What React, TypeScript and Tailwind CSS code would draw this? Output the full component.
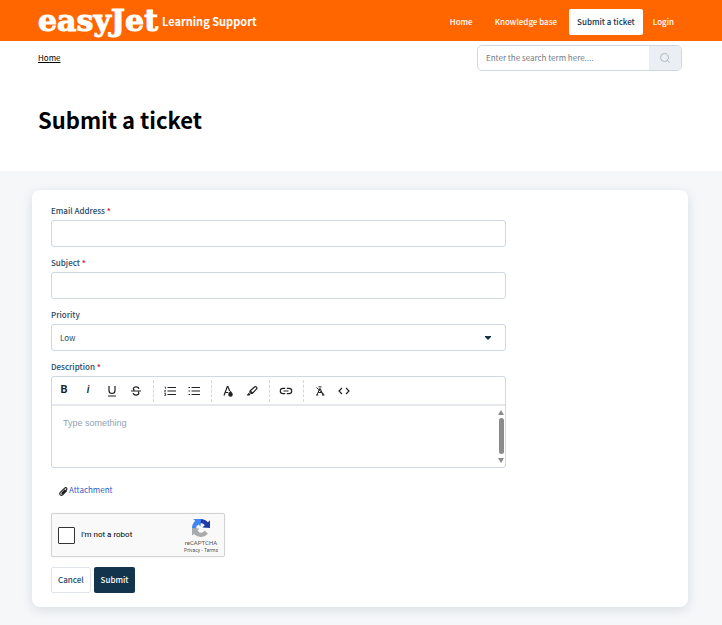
import type { ReactNode } from "react";
import { Search } from "lucide-react";

function ToolButton({ label, children }: { label: string; children: ReactNode }) {
  return (
    <button type="button" aria-label={label} className="flex h-6 w-6 items-center justify-center text-[#222]">
      {children}
    </button>
  );
}

function Icon({ children }: { children: ReactNode }) {
  return (
    <svg viewBox="0 0 14 14" className="size-3.5" fill="none" stroke="currentColor" strokeWidth="1.2" aria-hidden="true">
      {children}
    </svg>
  );
}

function Separator() {
  return <span className="mr-1 ml-[5px] h-[22px] border-l border-dashed border-[#cfd7df]" />;
}

function FieldLabel({ htmlFor, required, children }: { htmlFor: string; required?: boolean; children: ReactNode }) {
  return (
    <label htmlFor={htmlFor} className="mb-px block text-[8px] leading-4 font-medium text-[#264966]">
      {children}
      {required && <span className="font-bold text-[#d72d30]"> *</span>}
    </label>
  );
}

function RecaptchaLogo() {
  return (
    <svg viewBox="0 0 64 64" className="size-[18px]" aria-hidden="true">
      <path fill="#1c3aa9" d="M64 32c0-.5 0-.9 0-1.400V4.500l-7.200 7.200A32 32 0 0 0 7.400 11.500l11.800 11.900a15.700 15.700 0 0 1 4.800-5.400c2-1.500 4.800-2.800 8.700-2.800.5 0 .8 0 1.100.1 4.800.4 9 3 11.500 6.900L36.900 30.600 64 32" />
      <path fill="#4285f4" d="M31.900 0H4.500l7.200 7.300A32 32 0 0 0 11.500 56.600L23.300 44.800a15.700 15.700 0 0 1-5.400-4.800c-1.500-2-2.800-4.800-2.800-8.700 0-.5 0-.8.1-1.100.4-4.800 3-9 6.900-11.500L30.500 27 31.900 0" />
      <path fill="#ababab" d="M0 32v27.500l7.200-7.200a32 32 0 0 0 49.400.2L44.800 40.700a15.700 15.700 0 0 1-4.800 5.400c-2 1.500-4.800 2.800-8.700 2.800-.5 0-.8 0-1.100-.1-4.800-.4-9-3-11.500-6.900L27 33.500 0 32" />
    </svg>
  );
}

const fieldBox = "block h-[27px] w-full rounded-[3px] border border-[#cfd7df] bg-white px-2 text-[8px] text-[#264966] outline-none";

export default function App() {
  return (
    <div className="min-h-screen bg-[#f5f7f9] font-['Noto_Sans_CJK_SC','Noto_Sans',sans-serif] text-[8px] text-[#12344d]">
      <header className="flex h-[41px] items-center justify-between bg-[#ff6600] pr-10 pl-[38px] text-white">
        <a href="#home" className="flex items-center gap-1">
          <span className="font-['DejaVu_Serif',serif] text-[30px] leading-10 font-bold [-webkit-text-stroke:1px_white]">easyJet</span>
          <span className="text-[11px] leading-5 font-bold">Learning Support</span>
        </a>
        <nav className="flex items-center gap-[2px] pt-[3px] font-medium">
          <a href="#home" className="px-2.5">Home</a>
          <a href="#kb" className="px-2.5">Knowledge base</a>
          <a href="#new" className="flex h-[26px] items-center rounded-xs bg-white px-2 text-[#12344d]">Submit a ticket</a>
          <a href="#login" className="px-2">Login</a>
        </nav>
      </header>

      <section className="h-[130px] bg-white pt-1 pr-10 pl-[38px]">
        <div className="flex items-center justify-between">
          <a href="#home" className="text-black underline">Home</a>
          <form className="flex h-[26px] w-[205px] overflow-hidden rounded-[5px] border border-[#cfd7df]">
            <input
              type="search"
              aria-label="Search"
              placeholder="Enter the search term here...."
              className="min-w-0 flex-1 px-2 text-[8px] outline-none placeholder:text-[#6f7c87]"
            />
            <button type="button" aria-label="Search" className="flex w-8 items-center justify-center bg-[#ebeff3] text-[#a9b8c5]">
              <Search className="size-3" />
            </button>
          </form>
        </div>
        <h1 className="mt-8 text-[22px] leading-8 font-bold text-black">Submit a ticket</h1>
      </section>

      <main className="pt-[19px] pr-[34px] pb-[18px] pl-8">
        <form className="rounded-lg bg-white px-[19px] pt-[13px] pb-3.5 shadow-[0_3px_12px_rgba(18,52,77,0.12)]">
          <div className="flex max-w-[455px] flex-col gap-2">
            <div>
              <FieldLabel htmlFor="email" required>Email Address</FieldLabel>
              <input id="email" type="email" className={fieldBox} />
            </div>
            <div>
              <FieldLabel htmlFor="subject" required>Subject</FieldLabel>
              <input id="subject" type="text" className={fieldBox} />
            </div>
            <div>
              <FieldLabel htmlFor="priority">Priority</FieldLabel>
              <div className="relative">
                <select id="priority" className={`${fieldBox} appearance-none`}>
                  <option>Low</option>
                  <option>Medium</option>
                  <option>High</option>
                  <option>Urgent</option>
                </select>
                <svg viewBox="0 0 6 4" className="pointer-events-none absolute top-3 right-[15px] h-1 w-1.5" fill="#12344d" aria-hidden="true">
                  <path d="M0 0h6v1L3 4 0 1z" />
                </svg>
              </div>
            </div>
            <div>
              <FieldLabel htmlFor="description" required>Description</FieldLabel>
              <div className="rounded-[3px] border border-[#cfd7df]">
                <div className="flex h-[29px] items-center border-b-2 border-[#e4e8ec]">
                  <ToolButton label="Bold"><span className="font-['Roboto',sans-serif] text-[11px] font-bold">B</span></ToolButton>
                  <ToolButton label="Italic"><span className="font-['Roboto',sans-serif] text-[11px] font-medium italic">i</span></ToolButton>
                  <ToolButton label="Underline">
                    <Icon><path d="M4 2v4.500a3 3 0 0 0 6 0V2M3 12h8" /></Icon>
                  </ToolButton>
                  <ToolButton label="Strikethrough">
                    <Icon><path d="M9.700 4.800C9.500 3.500 8.500 2.900 7 2.900c-1.600 0-2.700.7-2.700 1.900 0 .8.500 1.300 1.200 1.600M4.200 9.200c.2 1.300 1.200 1.900 2.800 1.900s2.800-.7 2.800-2c0-.6-.2-1-.6-1.300M2 7h10" /></Icon>
                  </ToolButton>
                  <Separator />
                  <ToolButton label="Ordered list">
                    <Icon><path d="M4.500 3.500H13M4.500 7H13M4.500 10.500H13" /><path strokeWidth=".7" d="M1.500 3h1v2M1.300 6.500h1.400L1.400 8h1.400M1.300 9.500h1.400v2H1.300M1.700 10.500h1" /></Icon>
                  </ToolButton>
                  <ToolButton label="Unordered list">
                    <Icon><path d="M4.500 3.500H13M4.500 7H13M4.500 10.500H13M1.500 3.500H3M1.500 7H3M1.500 10.500H3" /></Icon>
                  </ToolButton>
                  <Separator />
                  <ToolButton label="Text colour">
                    <Icon>
                      <path d="M3 11.500 6.300 2.500h.6L8.700 7M4.300 8.500h3" />
                      <path fill="currentColor" stroke="none" d="M9.500 6.700c1.400 1.700 2.300 2.600 2.300 3.800a2.300 2.300 0 0 1-4.600 0c0-1.200.9-2.100 2.300-3.800z" />
                    </Icon>
                  </ToolButton>
                  <ToolButton label="Highlight">
                    <Icon>
                      <path d="M5.300 6.800 9.200 3.200c.7-.6 1.600-.6 2.200 0s.6 1.400 0 2L7.600 9.100zM5.300 6.800l-.5 1.400 1.200 1.200 1.600-.3" />
                      <path fill="currentColor" stroke="none" d="M3.700 8.800 5.500 10.500 4.200 11.500H1.500z" />
                    </Icon>
                  </ToolButton>
                  <Separator />
                  <ToolButton label="Insert link">
                    <Icon><path d="M6.200 4.300H4a2.700 2.700 0 0 0 0 5.400h2.200M7.800 4.300H10a2.700 2.700 0 0 1 0 5.400H7.800M4.500 7h5" /></Icon>
                  </ToolButton>
                  <Separator />
                  <ToolButton label="Clear formatting">
                    <Icon><path strokeWidth="1" d="M4 11 6.800 4.500h.4L10 11M5.200 8.500h3.600M3.500 3.500l7.500 7M5.500 2.900h3M3 11h2.200M9 11h2.500" /></Icon>
                  </ToolButton>
                  <ToolButton label="Code view">
                    <Icon><path d="M5 4 2 7l3 3M9 4l3 3-3 3" /></Icon>
                  </ToolButton>
                </div>
                <div className="flex h-[61px]">
                  <textarea
                    id="description"
                    placeholder="Type something"
                    className="min-w-0 flex-1 resize-none overflow-hidden px-[11px] py-[9px] font-['Liberation_Sans',sans-serif] text-[9px] leading-4 outline-none placeholder:text-[#92a2b1]"
                  />
                  <div aria-hidden="true" className="flex w-2 flex-col items-center justify-between py-1">
                    <svg viewBox="0 0 6 5" className="h-[5px] w-1.5" fill="#8b8b8b"><path d="M3 0 6 5H0z" /></svg>
                    <span className="mb-0.5 h-9 w-[5px] rounded-full bg-[#8b8b8b]" />
                    <svg viewBox="0 0 6 5" className="h-[5px] w-1.5" fill="#8b8b8b"><path d="M0 0h6L3 5z" /></svg>
                  </div>
                </div>
              </div>
            </div>
          </div>

          <button type="button" className="mt-3.5 ml-2 flex items-center gap-px leading-4 text-[#2c5cc5]">
            <svg viewBox="0 0 8 8" className="mt-0.5 size-[9px]" fill="none" stroke="#222" strokeWidth="1" aria-hidden="true">
              <path d="M5.500 2.300 2.700 5.200c-.4.500.2 1 .7.600l3.200-3.300C7.800 1 6.200-.1 5 1L1.200 4.800C-.3 6.600 1.700 8.300 3.300 6.900L6.900 3.300" />
            </svg>
            Attachment
          </button>

          <div className="mt-[15px] flex h-11 w-[174px] items-center justify-between rounded-xs border border-[#d3d3d3] bg-[#f9f9f9] pr-1.5 pl-1.5 font-['Roboto',sans-serif] text-black shadow-[0_0_2px_rgba(0,0,0,0.08)]">
            <label className="flex items-center gap-1.5">
              <input type="checkbox" className="size-[17px] appearance-none rounded-[1px] border border-[#333] bg-white" />
              I'm not a robot
            </label>
            <div className="flex flex-col items-center pt-0.5 text-[#555]">
              <RecaptchaLogo />
              <span className="mt-0.5 text-[6px] leading-2">reCAPTCHA</span>
              <span className="text-[5px] leading-1.5">
                <a href="#privacy">Privacy</a> - <a href="#terms">Terms</a>
              </span>
            </div>
          </div>

          <div className="mt-2.5 flex gap-[3px] font-medium">
            <button type="button" className="h-[26px] rounded-xs border border-[#dfe5eb] bg-white px-1.5 text-[#264966]">Cancel</button>
            <button type="submit" className="h-[26px] rounded-xs bg-[#12344d] px-[7px] text-white">Submit</button>
          </div>
        </form>
      </main>
    </div>
  );
}
